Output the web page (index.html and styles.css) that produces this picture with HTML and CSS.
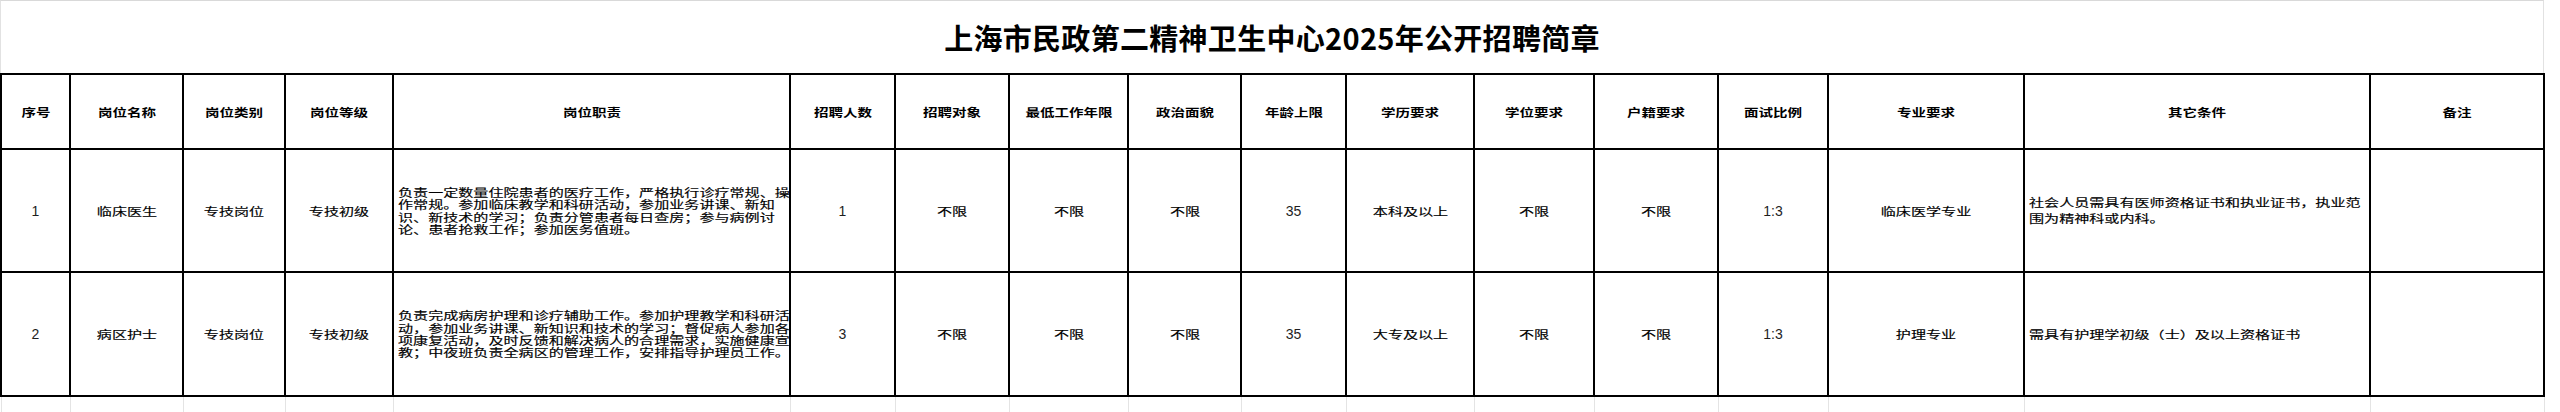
FILE: index.html
```html
<!DOCTYPE html>
<html lang="zh-CN">
<head>
<meta charset="utf-8">
<title>上海市民政第二精神卫生中心2025年公开招聘简章</title>
<link rel="stylesheet" href="styles.css">
</head>
<body>
<div class="sheet">
  <div class="title"><h1>上海市民政第二精神卫生中心2025年公开招聘简章</h1></div>
  <table class="jobs">
    <colgroup>
      <col class="c1"><col class="c2"><col class="c3"><col class="c4"><col class="c5"><col class="c6"><col class="c7"><col class="c8"><col class="c9"><col class="c10"><col class="c11"><col class="c12"><col class="c13"><col class="c14"><col class="c15"><col class="c16"><col class="c17">
    </colgroup>
    <thead>
      <tr class="head">
        <th><span class="cj">序号</span></th>
        <th><span class="cj">岗位名称</span></th>
        <th><span class="cj">岗位类别</span></th>
        <th><span class="cj">岗位等级</span></th>
        <th><span class="cj">岗位职责</span></th>
        <th><span class="cj">招聘人数</span></th>
        <th><span class="cj">招聘对象</span></th>
        <th><span class="cj">最低工作年限</span></th>
        <th><span class="cj">政治面貌</span></th>
        <th><span class="cj">年龄上限</span></th>
        <th><span class="cj">学历要求</span></th>
        <th><span class="cj">学位要求</span></th>
        <th><span class="cj">户籍要求</span></th>
        <th><span class="cj">面试比例</span></th>
        <th><span class="cj">专业要求</span></th>
        <th><span class="cj">其它条件</span></th>
        <th><span class="cj">备注</span></th>
      </tr>
    </thead>
    <tbody>
      <tr class="r1">
        <td class="num">1</td>
        <td><span class="cj">临床医生</span></td>
        <td><span class="cj">专技岗位</span></td>
        <td><span class="cj">专技初级</span></td>
        <td class="text"><div class="para">负责一定数量住院患者的医疗工作，严格执行诊疗常规、操<br>作常规。参加临床教学和科研活动，参加业务讲课、新知<br>识、新技术的学习；负责分管患者每日查房；参与病例讨<br>论、患者抢救工作；参加医务值班。</div></td>
        <td class="num">1</td>
        <td><span class="cj">不限</span></td>
        <td><span class="cj">不限</span></td>
        <td><span class="cj">不限</span></td>
        <td class="num">35</td>
        <td><span class="cj">本科及以上</span></td>
        <td><span class="cj">不限</span></td>
        <td><span class="cj">不限</span></td>
        <td class="num">1:3</td>
        <td><span class="cj">临床医学专业</span></td>
        <td class="text"><div class="para loose">社会人员需具有医师资格证书和执业证书，执业范<br>围为精神科或内科。</div></td>
        <td></td>
      </tr>
      <tr class="r2">
        <td class="num">2</td>
        <td><span class="cj">病区护士</span></td>
        <td><span class="cj">专技岗位</span></td>
        <td><span class="cj">专技初级</span></td>
        <td class="text"><div class="para">负责完成病房护理和诊疗辅助工作。参加护理教学和科研活<br>动，参加业务讲课、新知识和技术的学习；督促病人参加各<br>项康复活动，及时反馈和解决病人的合理需求，实施健康宣<br>教；中夜班负责全病区的管理工作，安排指导护理员工作。</div></td>
        <td class="num">3</td>
        <td><span class="cj">不限</span></td>
        <td><span class="cj">不限</span></td>
        <td><span class="cj">不限</span></td>
        <td class="num">35</td>
        <td><span class="cj">大专及以上</span></td>
        <td><span class="cj">不限</span></td>
        <td><span class="cj">不限</span></td>
        <td class="num">1:3</td>
        <td><span class="cj">护理专业</span></td>
        <td class="text"><div class="para">需具有护理学初级（士）及以上资格证书</div></td>
        <td></td>
      </tr>
      <tr class="pad">
        <td></td><td></td><td></td><td></td><td></td><td></td><td></td><td></td><td></td><td></td><td></td><td></td><td></td><td></td><td></td><td></td><td></td>
      </tr>
    </tbody>
  </table>
</div>
</body>
</html>
```

FILE: styles.css
```css
html, body {
  margin: 0;
  padding: 0;
  background: #ffffff;
}

body {
  width: 2560px;
  height: 412px;
  overflow: hidden;
  font-family: "Noto Sans CJK SC", "Noto Sans", sans-serif;
  color: #000;
}

.sheet {
  width: 2560px;
}

.title {
  box-sizing: border-box;
  width: 2544px;
  height: 73px;
  border-top: 1px solid #d9d9d9;
  border-left: 1px solid #e2e2e2;
  border-right: 1px solid #e2e2e2;
  display: flex;
  align-items: center;
  justify-content: center;
}

.title h1 {
  margin: 0;
  font-size: 29px;
  font-weight: 700;
  line-height: 1;
  letter-spacing: 0.3px;
  color: #000;
}

.jobs {
  border-collapse: collapse;
  table-layout: fixed;
  width: 2543px;
}

.c1 { width: 69px; }
.c2 { width: 113px; }
.c3 { width: 102px; }
.c4 { width: 108px; }
.c5 { width: 397px; }
.c6 { width: 105px; }
.c7 { width: 114px; }
.c8 { width: 119px; }
.c9 { width: 113px; }
.c10 { width: 105px; }
.c11 { width: 128px; }
.c12 { width: 120px; }
.c13 { width: 124px; }
.c14 { width: 110px; }
.c15 { width: 196px; }
.c16 { width: 346px; }
.c17 { width: 174px; }

.jobs th,
.jobs td {
  border: 2px solid #000;
  padding: 0 4px;
  text-align: center;
  vertical-align: middle;
  overflow: visible;
  white-space: nowrap;
}

.jobs th {
  font-size: 11px;
  font-weight: 700;
  line-height: 12px;
}

.jobs td {
  font-size: 11px;
  font-weight: 400;
  line-height: 12px;
  -webkit-text-stroke: 0.15px #000;
}

.head { height: 75px; }
.r1 { height: 123px; }
.r2 { height: 124px; }

.cj {
  display: inline-block;
  transform: scaleX(1.37);
  transform-origin: 50% 50%;
}

.jobs th .cj {
  transform: scaleX(1.32);
}

.jobs td.num {
  font-family: "Liberation Sans", Arial, sans-serif;
  font-size: 14px;
  color: #1e1e1e;
  -webkit-text-stroke: 0;
}

.jobs td.text {
  text-align: left;
}

.para {
  display: inline-block;
  font-size: 11px;
  line-height: 12.3px;
  white-space: nowrap;
  transform: scaleX(1.37);
  transform-origin: 0 50%;
}

.para.loose {
  line-height: 15.7px;
}

.pad {
  height: 17px;
}

.jobs .pad td {
  border-top: 2px solid #000;
  border-bottom: none;
  border-left: 1px solid #e4e4e4;
  border-right: 1px solid #e4e4e4;
}
```
